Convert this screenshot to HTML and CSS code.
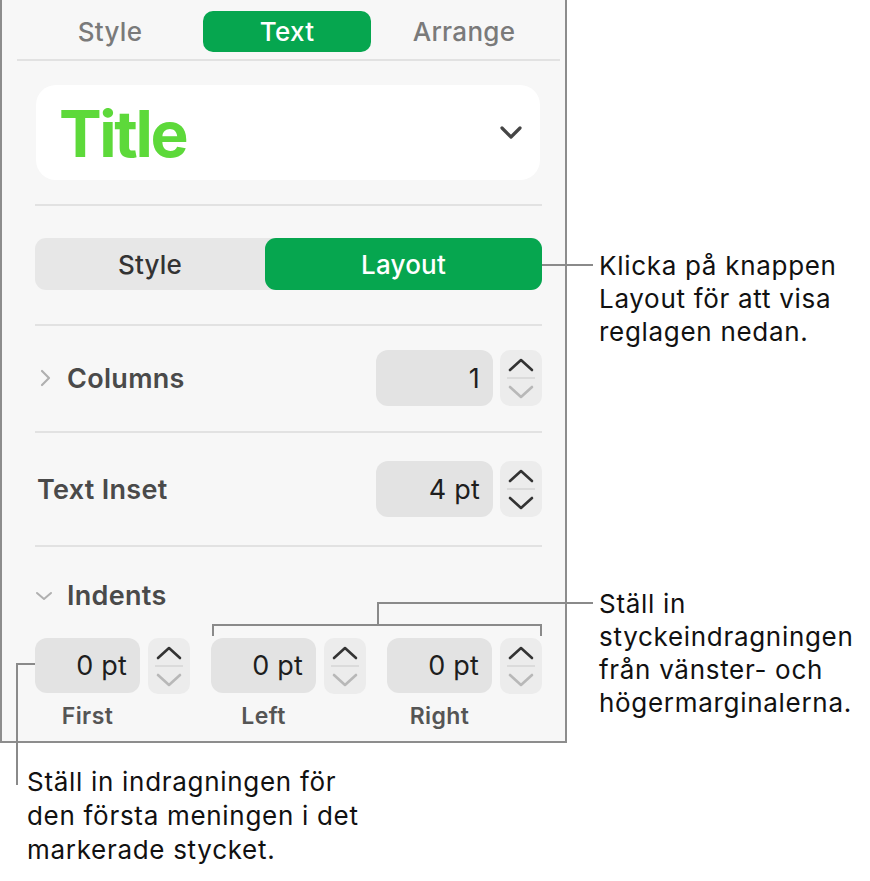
FILE: index.html
```html
<!DOCTYPE html>
<html>
<head>
<meta charset="utf-8">
<link rel="stylesheet" href="styles.css">
</head>
<body>
<div class="page">
  <div class="panel">
    <div class="tabs">
      <div class="tab">Style</div>
      <div class="tab active">Text</div>
      <div class="tab">Arrange</div>
    </div>
    <div class="sep sep-wide"></div>
    <div class="inner">
      <div class="title-box">
        <span class="title-text">Title</span>
        <svg class="dd-chev" width="24" height="16" viewBox="0 0 24 16"><path d="M3 3 L12 12 L21 3" fill="none" stroke="#454545" stroke-width="3.2" stroke-linecap="round" stroke-linejoin="round"/></svg>
      </div>
      <div class="sep s2"></div>
      <div class="segmented">
        <div class="seg">Style</div>
        <div class="seg on">Layout</div>
      </div>
      <div class="sep s3"></div>
      <div class="row r-columns">
        <div class="row-label">
          <svg class="disc" width="16" height="20" viewBox="0 0 16 20"><path d="M5 3 L12 10 L5 17" fill="none" stroke="#b0b0b0" stroke-width="2.2" stroke-linecap="round" stroke-linejoin="round"/></svg>
          <span class="lbl">Columns</span>
        </div>
        <div class="ctrl">
          <div class="field wide">1</div>
          <div class="stepper">
            <svg width="42" height="56" viewBox="0 0 42 56"><path d="M10 20 L21 10 L32 20" fill="none" stroke="#333" stroke-width="2.6" stroke-linecap="round" stroke-linejoin="round"/><line x1="7" y1="28" x2="35" y2="28" stroke="#d6d6d6" stroke-width="1.5"/><path d="M10 37 L21 47 L32 37" fill="none" stroke="#b8b8b8" stroke-width="2.6" stroke-linecap="round" stroke-linejoin="round"/></svg>
          </div>
        </div>
      </div>
      <div class="sep s4"></div>
      <div class="row r-inset">
        <div class="row-label"><span class="lbl flush">Text Inset</span></div>
        <div class="ctrl">
          <div class="field wide">4 pt</div>
          <div class="stepper">
            <svg width="42" height="56" viewBox="0 0 42 56"><path d="M10 20 L21 10 L32 20" fill="none" stroke="#333" stroke-width="2.6" stroke-linecap="round" stroke-linejoin="round"/><line x1="7" y1="28" x2="35" y2="28" stroke="#d6d6d6" stroke-width="1.5"/><path d="M10 37 L21 47 L32 37" fill="none" stroke="#333" stroke-width="2.6" stroke-linecap="round" stroke-linejoin="round"/></svg>
          </div>
        </div>
      </div>
      <div class="sep s5"></div>
      <div class="indents-head">
        <svg class="disc-down" width="18" height="12" viewBox="0 0 18 12"><path d="M2 3 L9 9 L16 3" fill="none" stroke="#b0b0b0" stroke-width="2" stroke-linecap="round" stroke-linejoin="round"/></svg>
        <span class="lbl">Indents</span>
      </div>
      <div class="indents">
        <div class="ind">
          <div class="ind-ctrl">
            <div class="field">0 pt</div>
            <div class="stepper">
              <svg width="42" height="56" viewBox="0 0 42 56"><path d="M10 20 L21 10 L32 20" fill="none" stroke="#333" stroke-width="2.6" stroke-linecap="round" stroke-linejoin="round"/><line x1="7" y1="28" x2="35" y2="28" stroke="#d6d6d6" stroke-width="1.5"/><path d="M10 37 L21 47 L32 37" fill="none" stroke="#b8b8b8" stroke-width="2.6" stroke-linecap="round" stroke-linejoin="round"/></svg>
            </div>
          </div>
          <div class="ind-lbl">First</div>
        </div>
        <div class="ind">
          <div class="ind-ctrl">
            <div class="field">0 pt</div>
            <div class="stepper">
              <svg width="42" height="56" viewBox="0 0 42 56"><path d="M10 20 L21 10 L32 20" fill="none" stroke="#333" stroke-width="2.6" stroke-linecap="round" stroke-linejoin="round"/><line x1="7" y1="28" x2="35" y2="28" stroke="#d6d6d6" stroke-width="1.5"/><path d="M10 37 L21 47 L32 37" fill="none" stroke="#b8b8b8" stroke-width="2.6" stroke-linecap="round" stroke-linejoin="round"/></svg>
            </div>
          </div>
          <div class="ind-lbl">Left</div>
        </div>
        <div class="ind">
          <div class="ind-ctrl">
            <div class="field">0 pt</div>
            <div class="stepper">
              <svg width="42" height="56" viewBox="0 0 42 56"><path d="M10 20 L21 10 L32 20" fill="none" stroke="#333" stroke-width="2.6" stroke-linecap="round" stroke-linejoin="round"/><line x1="7" y1="28" x2="35" y2="28" stroke="#d6d6d6" stroke-width="1.5"/><path d="M10 37 L21 47 L32 37" fill="none" stroke="#b8b8b8" stroke-width="2.6" stroke-linecap="round" stroke-linejoin="round"/></svg>
            </div>
          </div>
          <div class="ind-lbl">Right</div>
        </div>
      </div>
    </div>
  </div>

  <!-- callout leader lines (overlay) -->
  <div class="ln h1"></div>
  <div class="ln br-h"></div>
  <div class="ln br-l"></div>
  <div class="ln br-r"></div>
  <div class="ln br-v"></div>
  <div class="ln br-out"></div>
  <div class="ln f-h"></div>
  <div class="ln f-v"></div>

  <div class="callout c1">Klicka på knappen<br>Layout för att visa<br>reglagen nedan.</div>
  <div class="callout c2">Ställ in<br>styckeindragningen<br>från vänster- och<br>högermarginalerna.</div>
  <div class="callout c3">Ställ in indragningen för<br>den första meningen i det<br>markerade stycket.</div>
</div>
</body>
</html>
```

FILE: styles.css
```css
html, body {
  margin: 0;
  padding: 0;
  background: #ffffff;
}
body {
  font-family: Inter, "Liberation Sans", sans-serif;
  color: #222;
}
.page {
  position: relative;
  width: 870px;
  height: 881px;
}
.panel {
  box-sizing: border-box;
  width: 567px;
  height: 743px;
  background: #f7f7f7;
  border: 2px solid #8d8d8d;
  border-top: none;
}
.tabs {
  display: flex;
  gap: 9px;
  padding: 11px 0 0 24px;
}
.tab {
  width: 168px;
  height: 41px;
  border-radius: 10px;
  display: flex;
  align-items: center;
  justify-content: center;
  font-size: 26px;
  font-weight: 500;
  letter-spacing: 0.3px;
  color: #7a7a7a;
}
.tab.active {
  background: #06a64f;
  color: #fff;
}
.sep {
  height: 2px;
  background: #e2e2e2;
}
.sep-wide {
  margin: 7px 0 0 15px;
  width: 543px;
}
.inner {
  padding-left: 33px;
  width: 507px;
}
.title-box {
  margin-top: 24px;
  height: 95px;
  width: 504px;
  margin-left: 1px;
  background: #fff;
  border-radius: 20px;
  display: flex;
  align-items: center;
  justify-content: space-between;
  padding: 0 17px 0 23px;
  box-sizing: border-box;
}
.title-text {
  font-size: 64px;
  font-weight: 700;
  color: #5dd93a;
  letter-spacing: -2.4px;
  line-height: 1;
  margin-top: 2px;
}
.dd-chev {
  display: block;
}
.s2 { margin-top: 24px; }
.segmented {
  margin-top: 32px;
  height: 52px;
  border-radius: 11px;
  background: #e7e7e7;
  display: flex;
}
.seg {
  display: flex;
  align-items: center;
  justify-content: center;
  font-size: 26px;
  font-weight: 500;
  letter-spacing: 0.2px;
  color: #333;
  width: 230px;
}
.seg.on {
  flex: 1;
  background: #06a64f;
  color: #fff;
  border-radius: 11px;
}
.s3 { margin-top: 34px; }
.row {
  display: flex;
  align-items: center;
  justify-content: space-between;
}
.r-columns { margin-top: 24px; }
.s4 { margin-top: 25px; }
.r-inset { margin-top: 28px; }
.s5 { margin-top: 28px; }
.row-label {
  display: flex;
  align-items: center;
}
.disc {
  display: block;
  margin: 0 14px 0 2px;
}
.lbl {
  font-size: 27px;
  font-weight: 600;
  letter-spacing: 0.3px;
  color: #4a4a4a;
}
.lbl.flush {
  margin-left: 2px;
}
.ctrl {
  display: flex;
  gap: 7px;
}
.field {
  box-sizing: border-box;
  width: 105px;
  height: 55px;
  background: #e3e3e3;
  border-radius: 12px;
  display: flex;
  align-items: center;
  justify-content: flex-end;
  padding-right: 13px;
  font-size: 27px;
  letter-spacing: 0.2px;
  color: #1e1e1e;
}
.field.wide {
  width: 117px;
  height: 56px;
}
.stepper {
  width: 42px;
  height: 56px;
  background: #ececec;
  border-radius: 10px;
}
.stepper svg {
  display: block;
}
.indents-head {
  margin-top: 33px;
  height: 30px;
  display: flex;
  align-items: center;
}
.disc-down {
  display: block;
  margin: 2px 14px 0 0;
}
.indents {
  margin-top: 28px;
  display: flex;
  gap: 21px;
}
.ind-ctrl {
  display: flex;
  gap: 8px;
}
.ind-lbl {
  width: 105px;
  text-align: center;
  margin-top: 9px;
  font-size: 23px;
  font-weight: 600;
  letter-spacing: 0.4px;
  color: #555;
  line-height: 26px;
}

/* callouts */
.ln {
  position: absolute;
  background: #8a8a8a;
}
.h1 { left: 542px; top: 264px; width: 51px; height: 2px; }
.br-h { left: 212px; top: 624px; width: 330px; height: 2px; }
.br-l { left: 212px; top: 624px; width: 2px; height: 12px; }
.br-r { left: 540px; top: 624px; width: 2px; height: 12px; }
.br-v { left: 377px; top: 602px; width: 2px; height: 23px; }
.br-out { left: 377px; top: 602px; width: 216px; height: 2px; }
.f-h { left: 16px; top: 663px; width: 19px; height: 2px; }
.f-v { left: 16px; top: 663px; width: 2px; height: 122px; }

.callout {
  position: absolute;
  font-size: 26px;
  letter-spacing: 0.7px;
  color: #111;
  line-height: 33px;
}
.c1 { left: 599px; top: 249px; }
.c2 { left: 599px; top: 587px; }
.c3 { left: 27px; top: 765px; line-height: 34px; }
```
